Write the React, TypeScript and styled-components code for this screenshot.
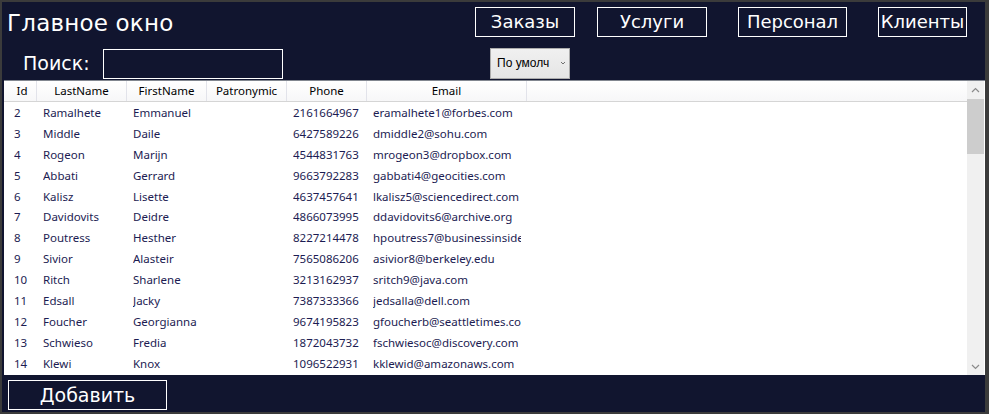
import React from "react";
import styled, { createGlobalStyle } from "styled-components";

const Global = createGlobalStyle`
  html, body { margin: 0; padding: 0; background: #3b3b3b; }
  body { width: 989px; height: 414px; overflow: hidden; }
  * { box-sizing: border-box; }
`;

const Window = styled.div`
  margin: 2px 4px 2px 2px;
  width: 983px;
  height: 410px;
  background: #11152f;
  display: flex;
  flex-direction: column;
  font-family: "DejaVu Sans", "Noto Sans", sans-serif;
  color: #ffffff;
`;

const TopRow = styled.div`
  display: flex;
  align-items: flex-start;
  height: 43px;
  padding-top: 5px;
`;

const Title = styled.h1`
  margin: 0 0 0 5px;
  font-weight: normal;
  font-size: 23px;
  line-height: 33px;
  letter-spacing: 0.2px;
`;

const Nav = styled.div`
  margin-left: auto;
  margin-right: 18px;
  display: flex;
`;

const NavButton = styled.button<{ $w: number; $ml: number }>`
  width: ${(p) => p.$w}px;
  margin-left: ${(p) => p.$ml}px;
  height: 30px;
  background: transparent;
  border: 1px solid #ffffff;
  color: #ffffff;
  font-family: "DejaVu Sans", sans-serif;
  font-size: 18px;
  padding: 0;
  line-height: 28px;
`;

const SearchRow = styled.div`
  display: flex;
  align-items: center;
  height: 35px;
  padding-left: 21px;
`;

const SearchLabel = styled.span`
  font-size: 19px;
  width: 80px;
`;

const SearchInput = styled.div`
  width: 180px;
  height: 30px;
  border: 1px solid #ffffff;
  margin-top: 2px;
`;

const Combo = styled.div`
  margin-left: 207px;
  margin-top: 1px;
  width: 80px;
  height: 31px;
  background: linear-gradient(#f0f0f0, #e5e5e5);
  border: 1px solid #acacac;
  display: flex;
  align-items: center;
  padding-left: 6px;
  color: #000;
  font-family: "Liberation Sans", sans-serif;
  font-size: 12px;
`;

const ComboText = styled.span`
  flex: 1;
`;

const GridBox = styled.div`
  margin-left: 2px;
  height: 295px;
  background: #ffffff;
  border-top: 1px solid #828790;
  display: flex;
  font-family: "Segoe UI", "Noto Sans", sans-serif;
  font-size: 11.5px;
  overflow: hidden;
`;

const GridMain = styled.div`
  flex: 1;
  display: flex;
  flex-direction: column;
  padding-left: 4px;
`;

const cols = "29px 90px 80px 80px 80px 160px 1fr";

const HeaderRow = styled.div`
  display: grid;
  grid-template-columns: ${cols};
  height: 21px;
  background: linear-gradient(#ffffff, #f7f7f8);
  border-bottom: 1px solid #d5d5d5;
  margin-left: -4px;
  padding-left: 4px;
`;

const HeaderCell = styled.div`
  border-right: 1px solid #e2e3ea;
  text-align: center;
  line-height: 20px;
  color: #000;
  &:last-child { border-right: none; }
`;

const Row = styled.div`
  display: grid;
  grid-template-columns: ${cols};
  height: 20.9px;
  align-items: center;
  color: #1c1c52;
`;

const Cell = styled.div`
  margin-left: 6px;
  margin-right: 6px;
  white-space: nowrap;
  overflow: hidden;
`;

const ScrollBar = styled.div`
  width: 17px;
  background: #f0f0f0;
  display: flex;
  flex-direction: column;
  align-items: center;
  margin-right: 1px;
`;

const Arrow = styled.div`
  height: 17px;
  width: 17px;
  display: flex;
  align-items: center;
  justify-content: center;
`;

const Thumb = styled.div`
  width: 17px;
  height: 55px;
  margin-top: 1px;
  background: #cdcdcd;
`;

const Track = styled.div`
  flex: 1;
`;

const Bottom = styled.div`
  padding: 5px 0 0 6px;
`;

const AddButton = styled.button`
  width: 159px;
  height: 30px;
  background: transparent;
  border: 1px solid #ffffff;
  color: #ffffff;
  font-family: "DejaVu Sans", sans-serif;
  font-size: 19px;
  padding: 0;
`;

const data: [number, string, string, string, string][] = [
  [2, "Ramalhete", "Emmanuel", "2161664967", "eramalhete1@forbes.com"],
  [3, "Middle", "Daile", "6427589226", "dmiddle2@sohu.com"],
  [4, "Rogeon", "Marijn", "4544831763", "mrogeon3@dropbox.com"],
  [5, "Abbati", "Gerrard", "9663792283", "gabbati4@geocities.com"],
  [6, "Kalisz", "Lisette", "4637457641", "lkalisz5@sciencedirect.com"],
  [7, "Davidovits", "Deidre", "4866073995", "ddavidovits6@archive.org"],
  [8, "Poutress", "Hesther", "8227214478", "hpoutress7@businessinsider.com"],
  [9, "Sivior", "Alasteir", "7565086206", "asivior8@berkeley.edu"],
  [10, "Ritch", "Sharlene", "3213162937", "sritch9@java.com"],
  [11, "Edsall", "Jacky", "7387333366", "jedsalla@dell.com"],
  [12, "Foucher", "Georgianna", "9674195823", "gfoucherb@seattletimes.com"],
  [13, "Schwieso", "Fredia", "1872043732", "fschwiesoc@discovery.com"],
  [14, "Klewi", "Knox", "1096522931", "kklewid@amazonaws.com"],
];

const Chevron = ({ up }: { up?: boolean }) => (
  <svg width="9" height="6" viewBox="0 0 9 6">
    <path
      d={up ? "M1 5 L4.5 1.5 L8 5" : "M1 1 L4.5 4.5 L8 1"}
      fill="none"
      stroke="#8a8a8a"
      strokeWidth="1.2"
    />
  </svg>
);

export default function App() {
  return (
    <>
      <Global />
      <Window>
        <TopRow>
          <Title>Главное окно</Title>
          <Nav>
            <NavButton $w={100} $ml={0}>Заказы</NavButton>
            <NavButton $w={110} $ml={22}>Услуги</NavButton>
            <NavButton $w={109} $ml={31}>Персонал</NavButton>
            <NavButton $w={89} $ml={31}>Клиенты</NavButton>
          </Nav>
        </TopRow>
        <SearchRow>
          <SearchLabel>Поиск:</SearchLabel>
          <SearchInput />
          <Combo>
            <ComboText>По умолч</ComboText>
            <svg width="12" height="8" viewBox="0 0 12 8">
              <path d="M4 3 L6 5 L8 3" fill="none" stroke="#707070" strokeWidth="1" />
            </svg>
          </Combo>
        </SearchRow>
        <GridBox>
          <GridMain>
            <HeaderRow>
              <HeaderCell>Id</HeaderCell>
              <HeaderCell>LastName</HeaderCell>
              <HeaderCell>FirstName</HeaderCell>
              <HeaderCell>Patronymic</HeaderCell>
              <HeaderCell>Phone</HeaderCell>
              <HeaderCell>Email</HeaderCell>
              <HeaderCell />
            </HeaderRow>
            {data.map((r) => (
              <Row key={r[0]}>
                <Cell>{r[0]}</Cell>
                <Cell>{r[1]}</Cell>
                <Cell>{r[2]}</Cell>
                <Cell></Cell>
                <Cell>{r[3]}</Cell>
                <Cell>{r[4]}</Cell>
                <Cell></Cell>
              </Row>
            ))}
          </GridMain>
          <ScrollBar>
            <Arrow><Chevron up /></Arrow>
            <Thumb />
            <Track />
            <Arrow><Chevron /></Arrow>
          </ScrollBar>
        </GridBox>
        <Bottom>
          <AddButton>Добавить</AddButton>
        </Bottom>
      </Window>
    </>
  );
}
